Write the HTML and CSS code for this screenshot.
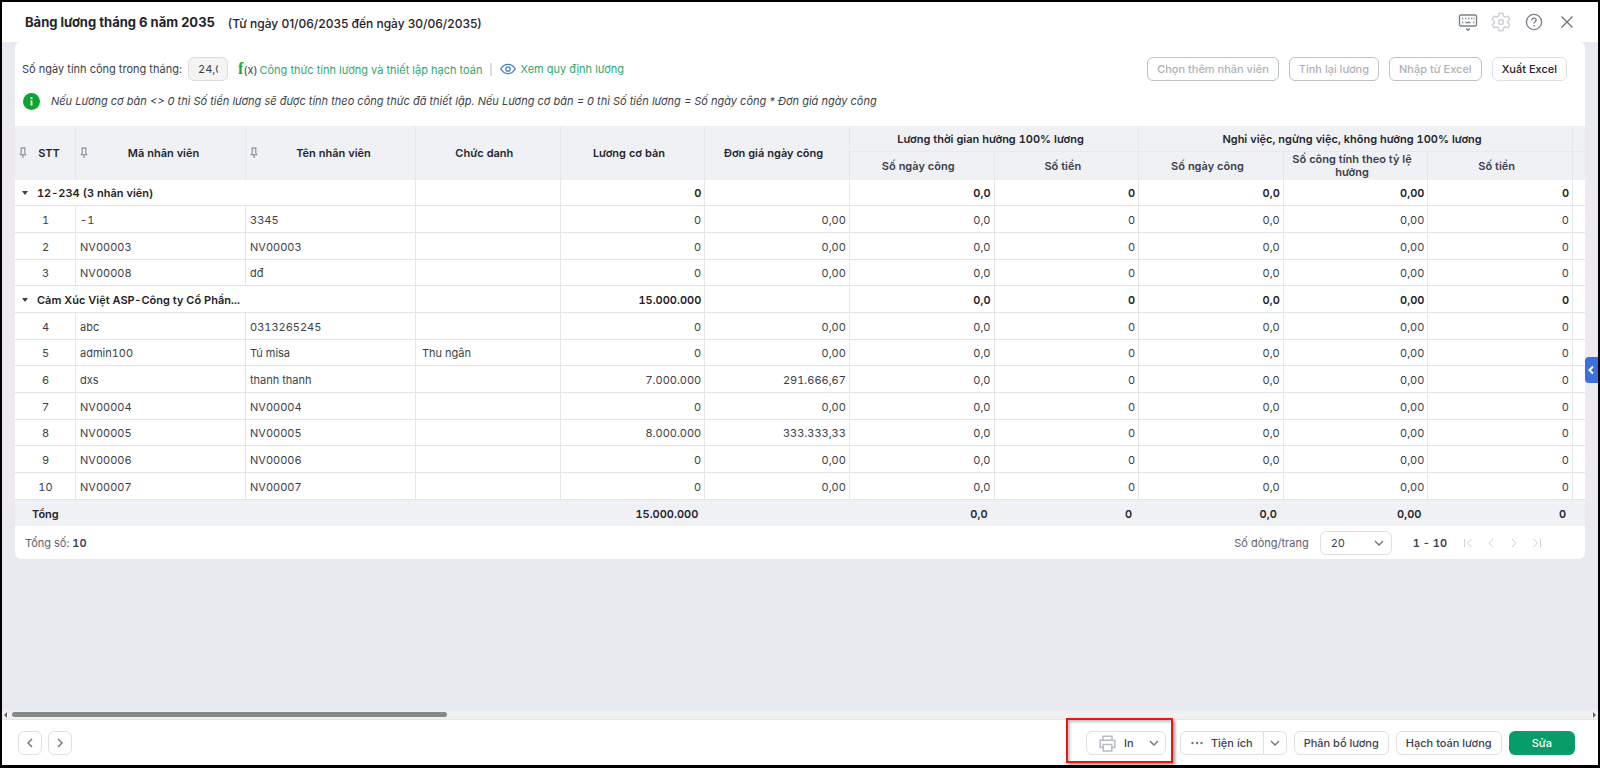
FILE: index.html
```html
<!DOCTYPE html>
<html lang="vi">
<head>
<meta charset="UTF-8">
<meta name="viewport" content="width=device-width, initial-scale=1.0">
<title>Bảng lương tháng 6 năm 2035</title>
<link rel="stylesheet" href="styles.css">
</head>
<body>

<header class="header">
  <h1>Bảng lương tháng 6 năm 2035</h1>
  <span class="period">(Từ ngày 01/06/2035 đến ngày 30/06/2035)</span>
  <div class="header-icons">
    <button type="button" aria-label="Phím tắt">
      <svg width="20" height="20" viewBox="0 0 20 20" fill="none" stroke="#7d828c" stroke-width="1.4"><rect x="1.5" y="3" width="17" height="11" rx="1.5"/><path d="M4 6.500h1.300M7 6.500h1.300M10 6.500h1.300M13 6.500h1.300M15.500 6.500h1M4 10.500h1.300M15 10.500h1.300M7.500 10.500h5M8.200 16.500l1.800 1.800 1.800-1.800"/></svg>
    </button>
    <button type="button" aria-label="Thiết lập">
      <svg width="20" height="20" viewBox="0 0 24 24" fill="none" stroke="#d0d3d9" stroke-width="1.8" stroke-linejoin="round"><circle cx="12" cy="12" r="3"/><path d="M9.800 1.500h4.400l.8 3.500 1.900 1.100 3.500-1.100 2.100 3.800-2.600 2.400v1.600l2.600 2.400-2.100 3.800-3.500-1.100-1.900 1.100-.8 3.500H9.800L9 19l-1.900-1.100L3.600 19l-2.100-3.800 2.600-2.400v-1.600L1.500 8.800 3.600 5l3.500 1.100L9 5z"/></svg>
    </button>
    <button type="button" aria-label="Trợ giúp">
      <svg width="20" height="20" viewBox="0 0 20 20" fill="none" stroke="#7d828c" stroke-width="1.4"><circle cx="10" cy="10" r="7.600"/><path d="M7.800 8.300c0-1.400 1-2.200 2.200-2.200s2.200.8 2.200 2c0 1.600-2.200 1.700-2.200 3.400M10 12.900v1.500"/></svg>
    </button>
    <button type="button" aria-label="Đóng">
      <svg width="20" height="20" viewBox="0 0 20 20" fill="none" stroke="#6f747e" stroke-width="1.4"><path d="M4.500 4.500l11 11M15.500 4.500l-11 11"/></svg>
    </button>
  </div>
</header>

<main class="content">
  <section class="card">
    <div class="toolbar">
      <label for="days">Số ngày tính công trong tháng:</label>
      <input type="text" id="days" value="24,00" readonly>
      <a class="formula" href="#"><b class="fx">f</b><span class="fx-arg">(x)</span>Công thức tính lương và thiết lập hạch toán</a>
      <span class="divider"></span>
      <a class="rules" href="#">
        <svg width="16" height="12" viewBox="0 0 16 12" fill="none" stroke="#3f7fca" stroke-width="1.300"><path d="M.8 6C2.500 3 5 1.400 8 1.400S13.500 3 15.200 6C13.500 9 11 10.600 8 10.600S2.500 9 .8 6z"/><circle cx="8" cy="6" r="2.200"/></svg>
        Xem quy định lương
      </a>
      <div class="toolbar-buttons">
        <button type="button" class="btn" disabled>Chọn thêm nhân viên</button>
        <button type="button" class="btn" disabled>Tính lại lương</button>
        <button type="button" class="btn" disabled>Nhập từ Excel</button>
        <button type="button" class="btn">Xuất Excel</button>
      </div>
    </div>

    <div class="note">
      <svg width="17" height="17" viewBox="0 0 17 17"><circle cx="8.500" cy="8.500" r="8.500" fill="#0ba52f"/><path d="M8.500 4v2M8.500 7.300v5.200" stroke="#fff" stroke-width="1.800"/></svg>
      <em>Nếu Lương cơ bản &lt;&gt; 0 thì Số tiền lương sẽ được tính theo công thức đã thiết lập. Nếu Lương cơ bản = 0 thì Số tiền lương = Số ngày công * Đơn giá ngày công</em>
    </div>

    <div class="table-wrap">
      <table>
        <colgroup>
          <col class="col-no"><col class="col-name"><col class="col-name">
          <col><col><col><col><col><col><col><col>
          <col class="col-rest">
        </colgroup>
        <thead>
          <tr>
            <th rowspan="2" class="pinned-cell"><div class="pinned pinned-no"><svg class="pin" viewBox="0 0 8 12"><path d="M1.500 1h5M2.200 1v5L1 7.800h6L5.800 6V1M4 7.800V11"/></svg><span>STT</span></div></th>
            <th rowspan="2" class="pinned-cell"><div class="pinned"><svg class="pin" viewBox="0 0 8 12"><path d="M1.500 1h5M2.200 1v5L1 7.800h6L5.800 6V1M4 7.800V11"/></svg><span>Mã nhân viên</span></div></th>
            <th rowspan="2" class="pinned-cell"><div class="pinned"><svg class="pin" viewBox="0 0 8 12"><path d="M1.500 1h5M2.200 1v5L1 7.800h6L5.800 6V1M4 7.800V11"/></svg><span>Tên nhân viên</span></div></th>
            <th rowspan="2">Chức danh</th>
            <th rowspan="2">Lương cơ bản</th>
            <th rowspan="2">Đơn giá ngày công</th>
            <th colspan="2">Lương thời gian hưởng 100% lương</th>
            <th colspan="3">Nghỉ việc, ngừng việc, không hưởng 100% lương</th>
            <th></th>
          </tr>
          <tr class="sub">
            <th>Số ngày công</th>
            <th>Số tiền</th>
            <th>Số ngày công</th>
            <th>Số công tính theo tỷ lệ hưởng</th>
            <th>Số tiền</th>
            <th></th>
          </tr>
        </thead>
        <tbody>
          <tr class="group"><td colspan="3"><span class="caret"></span>12-234 (3 nhân viên)</td><td></td><td>0</td><td></td><td>0,0</td><td>0</td><td>0,0</td><td>0,00</td><td>0</td><td></td></tr>
          <tr><td>1</td><td>-1</td><td>3345</td><td></td><td>0</td><td>0,00</td><td>0,0</td><td>0</td><td>0,0</td><td>0,00</td><td>0</td><td></td></tr>
          <tr><td>2</td><td>NV00003</td><td>NV00003</td><td></td><td>0</td><td>0,00</td><td>0,0</td><td>0</td><td>0,0</td><td>0,00</td><td>0</td><td></td></tr>
          <tr><td>3</td><td>NV00008</td><td>dđ</td><td></td><td>0</td><td>0,00</td><td>0,0</td><td>0</td><td>0,0</td><td>0,00</td><td>0</td><td></td></tr>
          <tr class="group"><td colspan="3"><span class="caret"></span>Cảm Xúc Việt ASP-Công ty Cổ Phần...</td><td></td><td>15.000.000</td><td></td><td>0,0</td><td>0</td><td>0,0</td><td>0,00</td><td>0</td><td></td></tr>
          <tr><td>4</td><td>abc</td><td>0313265245</td><td></td><td>0</td><td>0,00</td><td>0,0</td><td>0</td><td>0,0</td><td>0,00</td><td>0</td><td></td></tr>
          <tr><td>5</td><td>admin100</td><td>Tú misa</td><td>Thu ngân</td><td>0</td><td>0,00</td><td>0,0</td><td>0</td><td>0,0</td><td>0,00</td><td>0</td><td></td></tr>
          <tr><td>6</td><td>dxs</td><td>thanh thanh</td><td></td><td>7.000.000</td><td>291.666,67</td><td>0,0</td><td>0</td><td>0,0</td><td>0,00</td><td>0</td><td></td></tr>
          <tr><td>7</td><td>NV00004</td><td>NV00004</td><td></td><td>0</td><td>0,00</td><td>0,0</td><td>0</td><td>0,0</td><td>0,00</td><td>0</td><td></td></tr>
          <tr><td>8</td><td>NV00005</td><td>NV00005</td><td></td><td>8.000.000</td><td>333.333,33</td><td>0,0</td><td>0</td><td>0,0</td><td>0,00</td><td>0</td><td></td></tr>
          <tr><td>9</td><td>NV00006</td><td>NV00006</td><td></td><td>0</td><td>0,00</td><td>0,0</td><td>0</td><td>0,0</td><td>0,00</td><td>0</td><td></td></tr>
          <tr><td>10</td><td>NV00007</td><td>NV00007</td><td></td><td>0</td><td>0,00</td><td>0,0</td><td>0</td><td>0,0</td><td>0,00</td><td>0</td><td></td></tr>
        </tbody>
        <tfoot>
          <tr><td colspan="4">Tổng</td><td>15.000.000</td><td></td><td>0,0</td><td>0</td><td>0,0</td><td>0,00</td><td>0</td><td></td></tr>
        </tfoot>
      </table>
    </div>

    <div class="pager">
      <span>Tổng số: <b>10</b></span>
      <label class="per-page" for="pageSize">Số dòng/trang</label>
      <div class="select">
        <select id="pageSize">
          <option>10</option>
          <option selected>20</option>
          <option>50</option>
        </select>
        <svg class="chevron" viewBox="0 0 10 10"><path d="M1 3l4 4 4-4"/></svg>
      </div>
      <b class="range">1 - 10</b>
      <div class="pager-nav">
        <button type="button" disabled aria-label="Trang đầu"><svg viewBox="0 0 10 10"><path d="M1.500 1v8M8.500 1l-4 4 4 4"/></svg></button>
        <button type="button" disabled aria-label="Trang trước"><svg viewBox="0 0 10 10"><path d="M7 1L3 5l4 4"/></svg></button>
        <button type="button" disabled aria-label="Trang sau"><svg viewBox="0 0 10 10"><path d="M3 1l4 4-4 4"/></svg></button>
        <button type="button" disabled aria-label="Trang cuối"><svg viewBox="0 0 10 10"><path d="M8.500 1v8M1.500 1l4 4-4 4"/></svg></button>
      </div>
    </div>
  </section>

  <button type="button" class="side-tab" aria-label="Mở rộng"><svg viewBox="0 0 10 10"><path d="M7 1.500L3.500 5 7 8.500"/></svg></button>
</main>

<div class="scrollbar">
  <span class="arrow-left"></span>
  <span class="track"><span class="thumb"></span></span>
  <span class="arrow-right"></span>
</div>

<footer class="footer">
  <button type="button" class="btn btn-icon" aria-label="Kỳ trước"><svg class="chevron" viewBox="0 0 10 10"><path d="M7 1L3 5l4 4"/></svg></button>
  <button type="button" class="btn btn-icon" aria-label="Kỳ sau"><svg class="chevron" viewBox="0 0 10 10"><path d="M3 1l4 4-4 4"/></svg></button>
  <div class="actions">
    <div class="print">
      <button type="button" class="btn btn-print">
        <svg width="17" height="17" viewBox="0 0 17 17" fill="none" stroke="#b9bcc5" stroke-width="1.500"><path d="M4 5V1.200h9V5M4 12.500H1.200V5.200h14.600v7.300H13"/><rect x="4.200" y="9.500" width="8.600" height="6.500"/></svg>
        In
        <svg class="chevron" viewBox="0 0 10 10"><path d="M1 3l4 4 4-4"/></svg>
      </button>
    </div>
    <div class="split">
      <button type="button" class="btn btn-more"><svg width="12" height="4" viewBox="0 0 12 4" fill="#70747f"><circle cx="1.500" cy="2" r="1.200"/><circle cx="6" cy="2" r="1.200"/><circle cx="10.500" cy="2" r="1.200"/></svg>Tiện ích</button>
      <button type="button" class="btn btn-drop" aria-label="Tiện ích khác"><svg class="chevron" viewBox="0 0 10 10"><path d="M1 3l4 4 4-4"/></svg></button>
    </div>
    <button type="button" class="btn">Phân bổ lương</button>
    <button type="button" class="btn">Hạch toán lương</button>
    <button type="button" class="btn btn-primary">Sửa</button>
  </div>
</footer>

</body>
</html>
```
FILE: styles.css
```css
* {
  box-sizing: border-box;
}

body {
  display: flex;
  flex-direction: column;
  margin: 0;
  min-height: 100vh;
  border: 2px solid #000;
  border-bottom-width: 3px;
  background: #e7ebef;
  color: #3c3f48;
  font-family: Inter, "Liberation Sans", sans-serif;
  font-size: 11px;
  line-height: 14px;
}

button, input, select {
  font: inherit;
  color: inherit;
}

svg {
  display: block;
  flex: none;
}

a {
  color: #2fa871;
  text-decoration: none;
}

/* header */
.header {
  display: flex;
  align-items: center;
  height: 40px;
  padding: 0 21px 0 23px;
  background: #fff;
  color: #1f2229;
}

.header h1 {
  margin: 0 13px 0 0;
  font-size: 13px;
  font-weight: 700;
}

.period {
  padding-top: 4px;
  font-size: 12px;
  font-weight: 500;
}

.header-icons {
  display: flex;
  gap: 13px;
  margin-left: auto;
}

.header-icons button,
.pager-nav button {
  padding: 0;
  border: none;
  background: none;
}

/* content */
.content {
  position: relative;
  flex: 1;
  padding: 0 13px;
}

.card {
  background: #fff;
  border-radius: 6px;
}

.toolbar {
  display: flex;
  align-items: center;
  padding: 15px 18px 0 7px;
}

.toolbar input {
  width: 40px;
  height: 24px;
  margin: 0 10px 0 6px;
  padding: 0 9px;
  border: 1px solid #dcdcdf;
  border-radius: 6px;
  background: #f4f4f5;
  font-variant-numeric: tabular-nums;
}

.fx {
  color: #14a84b;
  font-family: "Liberation Serif", serif;
  font-size: 16px;
}

.fx-arg {
  margin-right: 2px;
  color: #3c3f48;
}

.divider {
  width: 2px;
  height: 13px;
  margin: 0 8px;
  background: #dcdde2;
}

.rules {
  display: flex;
  align-items: center;
  gap: 4px;
}

.toolbar-buttons {
  display: flex;
  gap: 10px;
  margin-left: auto;
}

.btn {
  height: 24px;
  padding: 0 9px;
  border: 1px solid #e0e0e3;
  border-radius: 6px;
  background: #fff;
  color: #3c3f4d;
  font-weight: 500;
  white-space: nowrap;
}

.toolbar .btn {
  color: #1f2229;
}

.toolbar .btn:disabled {
  border-color: #bfc0c3;
  color: #b0b1b5;
}

.note {
  display: flex;
  align-items: center;
  gap: 11px;
  height: 45px;
  padding: 0 8px 5px;
}

/* table */
.table-wrap {
  box-shadow: -13px 0 #eceaef, 13px 0 #eceaef;
}

table {
  width: 100%;
  table-layout: fixed;
  border-collapse: separate;
  border-spacing: 0;
  font-variant-numeric: tabular-nums;
}

.col-no {
  width: 61px;
}

.col-name {
  width: 170px;
}

.col-rest {
  width: 12px;
}

th, td {
  padding: 1px 3px 0 4px;
  border-right: 1px solid #e6e7eb;
  border-bottom: 1px solid #e3e4e8;
}

thead th {
  height: 26px;
  padding: 0 11px 0 4px;
  border-bottom-color: #e8e9ee;
  background: #f0f1f5;
  color: #24272f;
  font-weight: 600;
}

thead .sub th {
  height: 28px;
  border-bottom: none;
  color: #3c3f4d;
  line-height: 13px;
}

thead th[rowspan] {
  border-bottom: none;
}

thead .pinned-cell {
  padding: 0 4px;
}

th:last-child, td:last-child,
thead .sub th:last-child {
  padding: 0;
  border-right: none;
}

/* pin on the left, caption centred in the rest of the cell */
.pinned {
  display: grid;
  grid-template-columns: 8px 1fr 2px;
  align-items: center;
}

.pinned-no {
  grid-template-columns: 8px 1fr;
}

.pin {
  width: 8px;
  height: 12px;
  fill: none;
  stroke: #7d808a;
}

tbody td {
  height: 27px;
  text-align: right;
}

tbody tr:nth-child(3n+1) td {
  height: 26px;
}

tbody td:first-child {
  text-align: center;
}

tbody tr:not(.group) td:nth-child(2),
tbody tr:not(.group) td:nth-child(3),
tbody tr:not(.group) td:nth-child(4) {
  text-align: left;
}

tbody tr:not(.group) td:nth-child(4) {
  padding-left: 6px;
}

.group td {
  color: #1f2229;
  font-weight: 600;
}

.group td:first-child {
  padding-left: 7px;
  text-align: left;
}

.caret {
  display: inline-block;
  margin-right: 9px;
  border: 3px solid transparent;
  border-top: 4px solid #3c3f48;
  border-bottom: none;
  vertical-align: 2px;
}

tfoot td {
  height: 26px;
  padding-right: 7px;
  border: none;
  background: #f0f1f5;
  color: #24272f;
  font-weight: 600;
  text-align: right;
}

tfoot td:first-child {
  padding-left: 17px;
  text-align: left;
}

/* pager */
.pager {
  display: flex;
  align-items: center;
  height: 33px;
  padding: 0 43px 0 10px;
  color: #5f626d;
  font-variant-numeric: tabular-nums;
}

.pager b {
  color: #3c3f4d;
  font-weight: 600;
}

.per-page {
  margin-left: auto;
}

.select {
  position: relative;
  margin: 0 21px 0 11px;
}

.select select {
  appearance: none;
  width: 72px;
  height: 24px;
  padding: 0 10px;
  border: 1px solid #e0e0e3;
  border-radius: 6px;
  background: #fff;
  color: #3c3f48;
}

.select .chevron {
  position: absolute;
  top: 7px;
  right: 8px;
  pointer-events: none;
}

.chevron {
  width: 10px;
  height: 10px;
  fill: none;
  stroke: #70747f;
  stroke-width: 1.4;
}

.pager-nav {
  display: flex;
  gap: 13px;
  margin-left: 16px;
}

.pager-nav svg {
  width: 10px;
  height: 10px;
  fill: none;
  stroke: #d0d2d8;
}

.side-tab {
  position: absolute;
  top: 315px;
  right: 0;
  width: 13px;
  height: 26px;
  padding: 0 0 0 1px;
  border: none;
  border-radius: 4px 0 0 4px;
  background: #3c6fe0;
}

.side-tab svg {
  width: 10px;
  height: 10px;
  fill: none;
  stroke: #fff;
  stroke-width: 2;
}

/* horizontal scrollbar */
.scrollbar {
  display: flex;
  align-items: center;
  gap: 5px;
  height: 10px;
  padding: 0 2px;
  border-bottom: 1px solid #e6e6e6;
  background: #f1f1f1;
}

.track {
  flex: 1;
}

.thumb {
  display: block;
  width: 27.6%;
  height: 5px;
  border-radius: 3px;
  background: #888;
}

.arrow-left,
.arrow-right {
  border: 3px solid transparent;
}

.arrow-left {
  border-left: none;
  border-right-color: #666;
}

.arrow-right {
  border-right: none;
  border-left-color: #666;
}

/* footer */
.footer {
  display: flex;
  align-items: center;
  gap: 6px;
  height: 45px;
  padding: 0 23px 0 16px;
  background: #fff;
}

.btn-icon {
  width: 24px;
  padding: 0 6px;
}

.actions {
  display: flex;
  align-items: center;
  gap: 7px;
  margin-left: auto;
}

/* highlight around the print button */
.print {
  margin-bottom: 4px;
  padding: 11px 5px 6px 18px;
  border: 2px solid #f01414;
  box-shadow: 2px 2px 3px rgba(0, 0, 0, 0.4), inset 2px 2px 3px rgba(0, 0, 0, 0.25);
}

.btn-print {
  display: flex;
  align-items: center;
  gap: 8px;
  width: 80px;
  padding: 0 6px 0 12px;
}

.btn-print .chevron {
  margin-left: auto;
}

.split {
  display: flex;
}

.btn-more {
  display: flex;
  align-items: center;
  gap: 8px;
  padding: 0 10px;
  border-radius: 6px 0 0 6px;
}

.btn-drop {
  padding: 0 6px;
  border-left: none;
  border-radius: 0 6px 6px 0;
}

.btn-primary {
  padding: 0 23px;
  border: none;
  background: #069d68;
  color: #fff;
}
```
